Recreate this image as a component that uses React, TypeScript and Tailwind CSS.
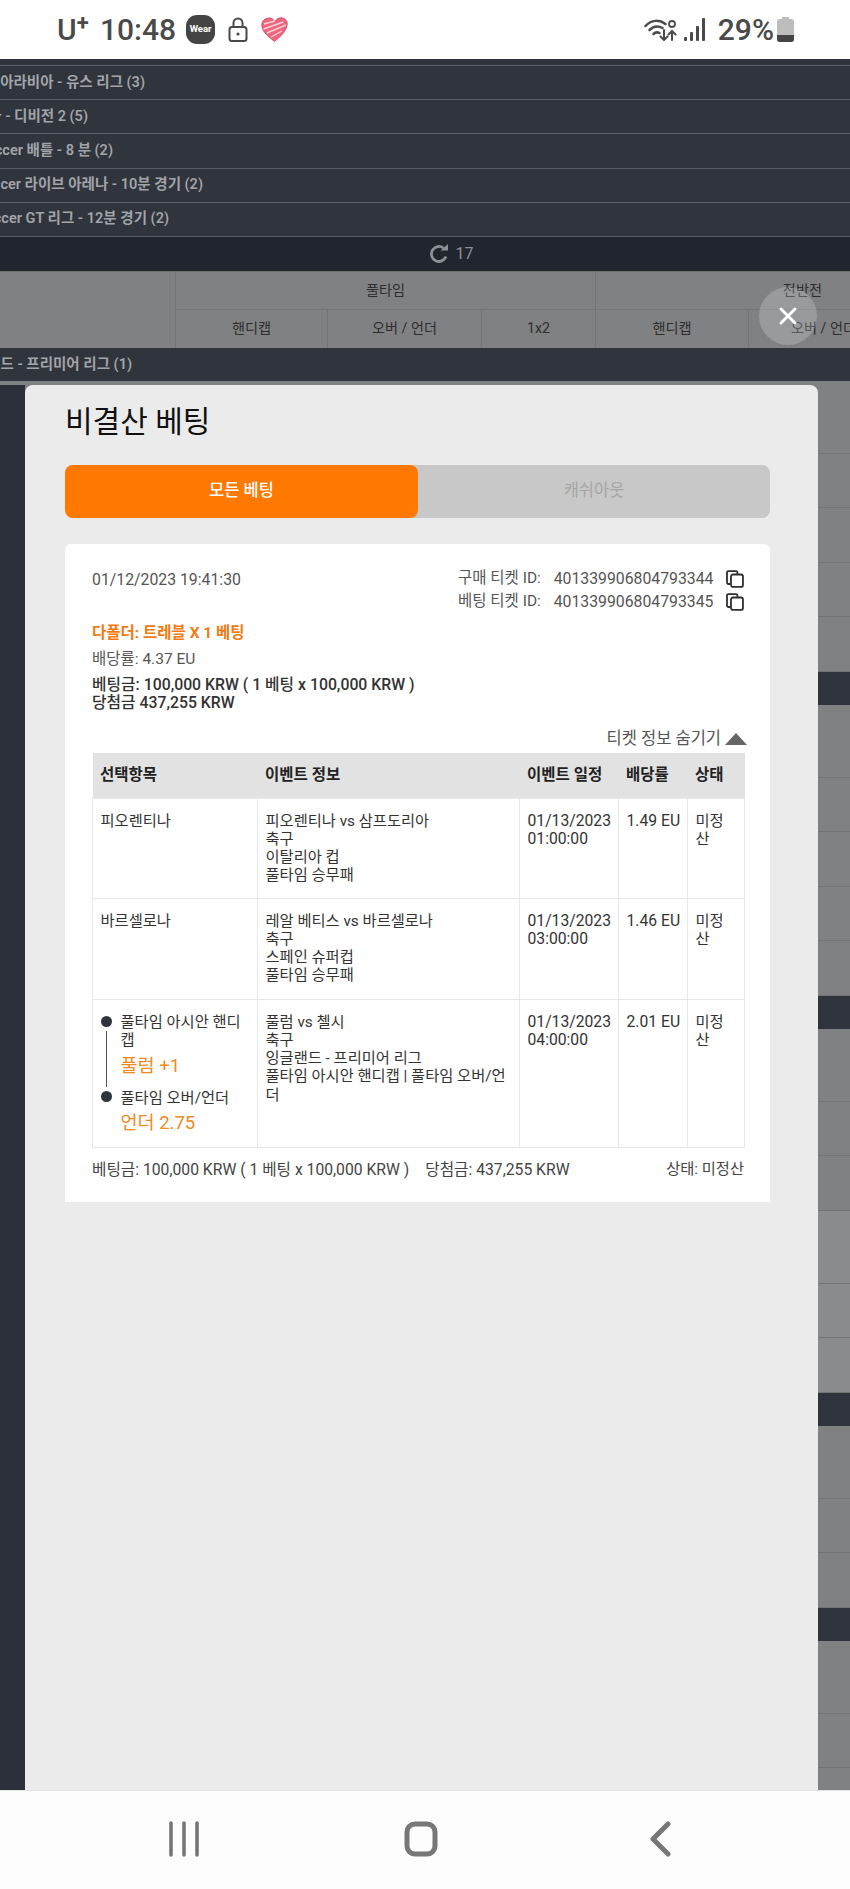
import { X } from "lucide-react";

const leagues = [
  { name: "사우디아라비아 - 유스 리그 (3)", width: "w-[145px]" },
  { name: "불가리아 - 디비전 2 (5)", width: "w-[88px]" },
  { name: "eSoccer 배틀 - 8 분 (2)", width: "w-[113px]" },
  { name: "eSoccer 라이브 아레나 - 10분 경기 (2)", width: "w-[203px]" },
  { name: "eSoccer GT 리그 - 12분 경기 (2)", width: "w-[169px]" },
];

const bets = [
  {
    pick: "피오렌티나",
    info: ["피오렌티나 vs 삼프도리아", "축구", "이탈리아 컵", "풀타임 승무패"],
    time: "01:00:00",
    odds: "1.49 EU",
    height: "h-[100px]",
  },
  {
    pick: "바르셀로나",
    info: ["레알 베티스 vs 바르셀로나", "축구", "스페인 슈퍼컵", "풀타임 승무패"],
    time: "03:00:00",
    odds: "1.46 EU",
    height: "h-[101px]",
  },
];

// rows of the page behind the modal, one list per dark league band
const tall = "h-[73px]";
const short = "h-[54.5px]";
const plain = "bg-[#808182]";
const light = "bg-[#8a8b8c]";
const groups = [
  [`${tall} ${plain}`, `${short} ${plain}`, `${short} ${plain}`, `${short} ${plain}`, `${short} ${plain}`],
  [`${tall} ${plain}`, `${short} ${plain}`, `${short} ${plain}`, `${short} ${plain}`, `${short} ${plain}`],
  [`${tall} ${plain}`, `${short} ${plain}`, `${short} ${plain}`, `${tall} ${light}`, `${short} ${light}`, `${short} ${light}`],
  [`${tall} ${plain}`, `${short} ${plain}`, `${short} ${plain}`],
];

function LeagueLabel({ name, width }: { name: string; width: string }) {
  return (
    <div className={`${width} flex justify-end overflow-hidden whitespace-nowrap text-[14.5px] font-semibold text-[#a2a4a8]`}>
      <span className="shrink-0">{name}</span>
    </div>
  );
}

function StatusBar() {
  return (
    <div className="h-[59px] bg-white flex items-center text-[#4a4a4a] shrink-0">
      <div className="ml-[57px] flex items-start w-[38px] text-[30px] leading-none font-medium">
        U<span className="text-[22px] leading-none -mt-[3px] font-bold">+</span>
      </div>
      <span className="ml-[5px] text-[30px] leading-none font-medium">10:48</span>
      <div className="ml-[10px] w-[29px] h-[29px] rounded-[11px] bg-[#444444] text-white text-[9.5px] font-bold flex items-center justify-center">
        Wear
      </div>
      <svg className="ml-[13px]" width="20" height="25" viewBox="0 0 20 25" fill="none" stroke="#4a4a4a" strokeWidth="2">
        <rect x="1.5" y="10" width="17" height="14" rx="2.5" />
        <path d="M5.5 10V6a4.5 4.5 0 0 1 9 0v4" />
        <circle cx="10" cy="17" r="1.6" fill="#4a4a4a" stroke="none" />
      </svg>
      <svg className="ml-[13px]" width="27" height="25" viewBox="0 0 27 25">
        <path d="M13.5 24.5C8 20 1 15 .8 8.5.7 3.5 4.5 1 8 1c2.500 0 4.500 1.300 5.800 3.500C15.500 2 18 .6 20.500.8 24 1 26.500 3.500 26.200 7.500 25.800 14 19 20 13.500 24.500z" fill="#f2647c" stroke="#b94a5e" strokeWidth=".8" />
        <path d="M3 7l11-3M2.500 12l20-7M6 16l19-8M10 20l11-6" stroke="#fbd5db" strokeWidth="1.400" fill="none" />
      </svg>
      <svg className="ml-auto" width="33" height="24" viewBox="0 0 33 24" fill="none" stroke="#4a4a4a" strokeWidth="2.500" strokeLinecap="round">
        <path d="M1.500 8c6-6.500 14-6.500 20-2" />
        <path d="M5.500 12c4-4 9-4 13-2" />
        <path d="M9.500 16c2-2 4-2 6-1" />
        <path d="M20 12v10m-3.500-3.500L20 22l3.500-3.500" strokeWidth="2" />
        <path d="M28 22v-9m-3.500 3.500L28 13l3.500 3.500" strokeWidth="2" />
        <circle cx="28" cy="6" r="3" strokeWidth="1.800" />
      </svg>
      <svg className="ml-[7px]" width="21" height="23" viewBox="0 0 21 23" fill="#4a4a4a">
        <rect x="0" y="19" width="3" height="4" rx="1" />
        <rect x="6" y="14" width="3" height="9" rx="1" />
        <rect x="12" y="8" width="3" height="15" rx="1" />
        <rect x="18" y="0" width="3" height="23" rx="1" />
      </svg>
      <span className="ml-[13px] text-[30px] leading-none font-medium">29%</span>
      <svg className="ml-[3px] mr-[56px]" width="17" height="25" viewBox="0 0 17 25">
        <path d="M5 0h7v2h2a3 3 0 0 1 3 3v17a3 3 0 0 1-3 3H3a3 3 0 0 1-3-3V5a3 3 0 0 1 3-3h2z" fill="#bdbdbd" />
        <path d="M0 18h17v4a3 3 0 0 1-3 3H3a3 3 0 0 1-3-3z" fill="#444444" />
      </svg>
    </div>
  );
}

function BackgroundPage() {
  return (
    <div className="h-full flex flex-col overflow-hidden bg-[#808182]">
      <div className="h-[6px] bg-[#2f333c] shrink-0" />
      {leagues.map((league) => (
        <div key={league.name} className="h-[34.2px] shrink-0 flex items-center bg-[#30343d] border-t border-[#5a5e66]">
          <LeagueLabel {...league} />
        </div>
      ))}
      <div className="h-[35px] shrink-0 flex items-center justify-center gap-[7px] pl-[52px] bg-[#21252e] border-t border-[#5a5e66] text-[#8d9096] text-[16px]">
        <svg width="20" height="19" viewBox="0 0 20 19" fill="none" stroke="#8d9096" strokeWidth="2.800">
          <path d="M17 12.500A7.500 7.500 0 1 1 14.500 4" />
          <path d="M11.500 6.500h7.500V0z" fill="#8d9096" stroke="none" />
        </svg>
        17
      </div>
      <div className="shrink-0 text-[14.2px] text-[#2e2e2e]">
        <div className="h-[38px] flex border-t border-[#6f7072]">
          <div className="w-[175px]" />
          <div className="w-[420px] flex items-center justify-center border-l border-[#747577]">풀타임</div>
          <div className="flex-1 flex items-center justify-end pr-[28px] border-l border-[#747577]">전반전</div>
        </div>
        <div className="h-[39px] flex">
          <div className="w-[175px]" />
          <div className="w-[152px] flex items-center justify-center border-l border-t border-[#747577]">핸디캡</div>
          <div className="w-[154px] flex items-center justify-center border-l border-t border-[#747577]">오버 / 언더</div>
          <div className="w-[114px] flex items-center justify-center border-l border-t border-[#747577]">1x2</div>
          <div className="w-[153px] flex items-center justify-center border-l border-t border-[#747577]">핸디캡</div>
          <div className="flex-1 flex items-center pl-[42px] whitespace-nowrap overflow-hidden border-l border-t border-[#747577]">오버 / 언더</div>
        </div>
      </div>
      <div className="h-[33px] shrink-0 flex items-center bg-[#30343d]">
        <LeagueLabel name="잉글랜드 - 프리미어 리그 (1)" width="w-[132px]" />
      </div>
      {groups.map((rows, i) => (
        <div key={i} className="shrink-0">
          {rows.map((row, r) => (
            <div key={r} className={`${row} border-b border-[#747577]`} />
          ))}
          <div className="h-[33px] bg-[#30343d]" />
        </div>
      ))}
      <div className="h-[73px] shrink-0 border-b border-[#747577]" />
      <div className="h-[54px] shrink-0 border-b border-[#747577]" />
    </div>
  );
}

function CopyIcon() {
  return (
    <svg width="18" height="18" viewBox="0 0 18 18" fill="none" stroke="#2e2e2e" strokeWidth="1.800">
      <path d="M4 14H2.500A1.500 1.500 0 0 1 1 12.500V2.500A1.500 1.500 0 0 1 2.500 1H10a1.500 1.500 0 0 1 1.500 1.500V4" />
      <rect x="5" y="4.500" width="12" height="12.500" rx="2" fill="#ffffff" />
    </svg>
  );
}

function TicketId({ label, value }: { label: string; value: string }) {
  return (
    <div className="h-[23px] flex items-center">
      <span className="w-[96px] whitespace-nowrap">{label}</span>
      <span className="w-[173px] text-[15.8px]">{value}</span>
      <CopyIcon />
    </div>
  );
}

function BetTable() {
  const cell = "border border-[#e8e8e8] px-[7.5px] pt-[13px] align-top text-[15.3px]";
  const numCell = "border border-[#e8e8e8] px-[7.5px] pt-[13px] align-top text-[15.7px]";
  const head = "bg-[#e2e2e2] px-[7.5px] text-left font-bold text-[#222222]";
  return (
    <table className="w-[652px] table-fixed border-collapse text-[15.5px] leading-[18.3px] text-[#333333]">
      <thead>
        <tr className="h-[45px]">
          <th className={`${head} w-[165px]`}>선택항목</th>
          <th className={`${head} w-[262px]`}>이벤트 정보</th>
          <th className={`${head} w-[99px]`}>이벤트 일정</th>
          <th className={`${head} w-[69px]`}>배당률</th>
          <th className={`${head} w-[57px]`}>상태</th>
        </tr>
      </thead>
      <tbody>
        {bets.map((bet) => (
          <tr key={bet.pick} className={bet.height}>
            <td className={cell}>{bet.pick}</td>
            <td className={cell}>
              {bet.info.map((line) => (
                <div key={line}>{line}</div>
              ))}
            </td>
            <td className={numCell}>
              01/13/2023
              <br />
              {bet.time}
            </td>
            <td className={`${numCell} whitespace-nowrap`}>{bet.odds}</td>
            <td className={cell}>미정산</td>
          </tr>
        ))}
        <tr className="h-[148px]">
          <td className={cell}>
            <div className="flex gap-[9px]">
              <div className="w-[11px] shrink-0 flex flex-col items-center pt-[3px]">
                <div className="w-[11px] h-[11px] rounded-full bg-[#2f333c]" />
                <div className="w-px h-[56px] bg-[#555555] my-[4px]" />
                <div className="w-[11px] h-[11px] rounded-full bg-[#2f333c]" />
              </div>
              <div className="flex-1">
                <div>풀타임 아시안 핸디캡</div>
                <div className="mt-[5px] text-[18.5px] leading-[24px] text-[#f08a24]">풀럼 +1</div>
                <div className="mt-[11px]">풀타임 오버/언더</div>
                <div className="mt-[4px] text-[18.5px] leading-[24px] text-[#f08a24]">언더 2.75</div>
              </div>
            </div>
          </td>
          <td className={cell}>
            <div>풀럼 vs 첼시</div>
            <div>축구</div>
            <div>잉글랜드 - 프리미어 리그</div>
            <div>풀타임 아시안 핸디캡 | 풀타임 오버/언더</div>
          </td>
          <td className={numCell}>
            01/13/2023
            <br />
            04:00:00
          </td>
          <td className={`${numCell} whitespace-nowrap`}>2.01 EU</td>
          <td className={cell}>미정산</td>
        </tr>
      </tbody>
    </table>
  );
}

function Modal() {
  return (
    <div className="absolute inset-x-0 top-[326px] bottom-0 flex">
      <div className="w-[25px] bg-[#2b303b]" />
      <div className="w-[793px] rounded-t-lg bg-[#ebebeb] pl-[40px] pr-[48px]">
        <h2 className="h-[80px] pt-[19px] text-[30px] leading-[36px] font-normal text-[#111111]">비결산 베팅</h2>
        <div className="h-[53px] flex rounded-lg bg-[#c8c8c8] text-[16.5px]">
          <div className="w-[353px] rounded-lg bg-[#ff7800] flex items-center justify-center text-white font-medium">모든 베팅</div>
          <div className="flex-1 flex items-center justify-center text-[#a5a5a5]">캐쉬아웃</div>
        </div>
        <div className="mt-[26px] rounded-t-md bg-white pl-[27px] pr-[26px] pt-[23px] pb-[21px] text-[15.5px] text-[#555555]">
          <div className="flex justify-between">
            <span className="mt-[1px] leading-[23px] text-[15.8px]">01/12/2023 19:41:30</span>
            <div className="w-[286px]">
              <TicketId label="구매 티켓 ID:" value="401339906804793344" />
              <TicketId label="베팅 티켓 ID:" value="401339906804793345" />
            </div>
          </div>
          <div className="mt-[9px] leading-[22px] font-bold text-[#f47a10]">다폴더: 트레블 X 1 베팅</div>
          <div className="mt-[4px] leading-[22px]">배당률: 4.37 EU</div>
          <div className="mt-[6px] leading-[18px] text-[15.8px] font-medium text-[#333333]">
            <div>베팅금: 100,000 KRW ( 1 베팅 x 100,000 KRW )</div>
            <div>당첨금 437,255 KRW</div>
          </div>
          <div className="mt-[16px] h-[22px] flex items-center justify-end gap-[4px] -mr-[3px] text-[16.5px]">
            티켓 정보 숨기기
            <svg width="22" height="12" viewBox="0 0 22 12" fill="#666666">
              <path d="M11 0l11 12H0z" />
            </svg>
          </div>
          <div className="mt-[3px]">
            <BetTable />
          </div>
          <div className="mt-[11px] h-[22px] flex items-center text-[15.7px] text-[#444444]">
            <span>베팅금: 100,000 KRW ( 1 베팅 x 100,000 KRW )</span>
            <span className="ml-[16px]">당첨금: 437,255 KRW</span>
            <span className="ml-auto text-[15.3px]">상태: 미정산</span>
          </div>
        </div>
      </div>
    </div>
  );
}

function NavBar() {
  return (
    <div className="h-[99px] shrink-0 bg-[#fdfdfd] border-t border-[#dfe3e6] flex items-center pb-[2px]">
      <svg className="ml-[169px]" width="30" height="36" viewBox="0 0 30 36" stroke="#777777" strokeWidth="3.600" strokeLinecap="round">
        <path d="M2 2v32M15 2v32M28 2v32" />
      </svg>
      <svg className="ml-[205px]" width="34" height="36" viewBox="0 0 34 36" fill="none" stroke="#777777" strokeWidth="5">
        <rect x="3" y="3" width="28" height="30" rx="8" />
      </svg>
      <svg className="ml-[211px]" width="22" height="36" viewBox="0 0 22 36" fill="none" stroke="#777777" strokeWidth="5" strokeLinecap="round" strokeLinejoin="round">
        <path d="M19 3L4 18l15 15" />
      </svg>
    </div>
  );
}

export default function App() {
  return (
    <div className="h-[1889px] w-[850px] flex flex-col overflow-hidden" style={{ fontFamily: 'Roboto, "Noto Sans CJK KR", sans-serif' }}>
      <StatusBar />
      <div className="relative flex-1 min-h-0">
        <BackgroundPage />
        <Modal />
        <button className="absolute left-[759px] top-[228px] w-[58px] h-[58px] rounded-full bg-white/20 flex items-center justify-center text-white">
          <X size={28} strokeWidth={2.500} />
        </button>
      </div>
      <NavBar />
    </div>
  );
}
